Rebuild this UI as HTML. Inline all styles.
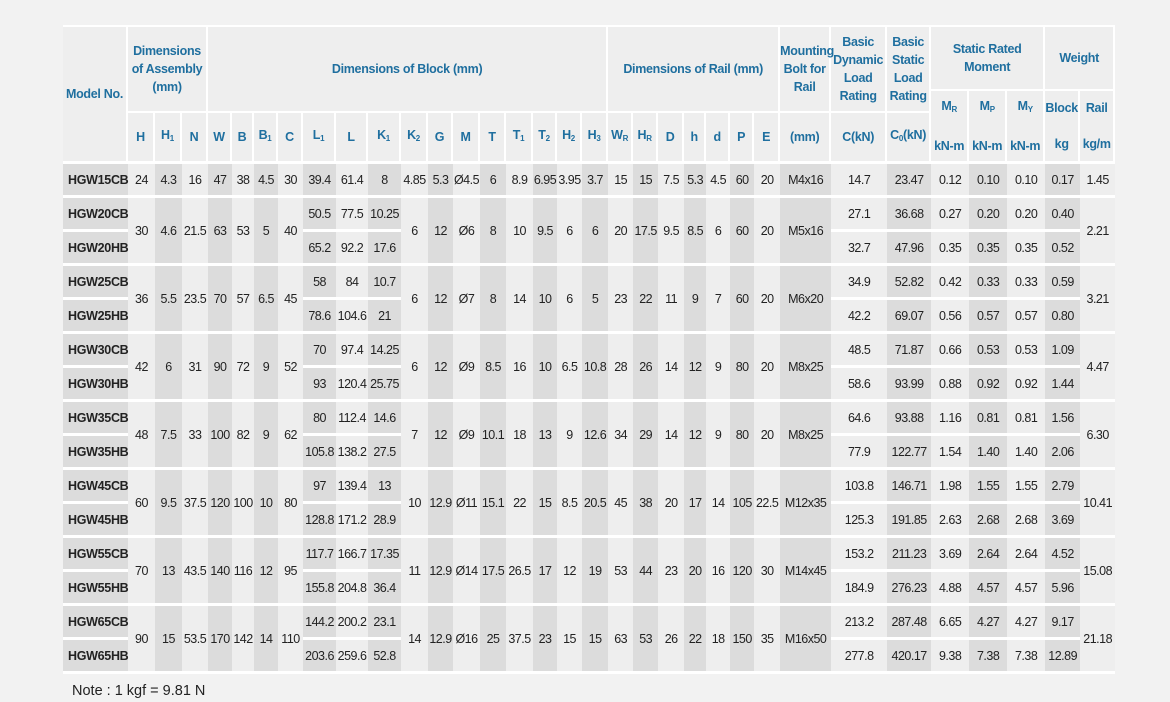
<!DOCTYPE html>
<html><head><meta charset="utf-8"><style>
body{margin:0;background:#f2f2f2;width:1170px;height:702px;overflow:hidden;font-family:"Liberation Sans",sans-serif;}
table{position:absolute;left:63px;top:25px;border-collapse:separate;border-spacing:0;table-layout:fixed;width:1052px;border-top:2px solid #fff;}
th{background:#eeeeee;color:#1f6f9f;font-weight:bold;font-size:12.5px;line-height:18px;border-right:2px solid #fff;border-bottom:2px solid #fff;padding:0;text-align:center;letter-spacing:-0.3px;white-space:nowrap;}
th.l{border-bottom:3px solid #fff}
td{border-bottom:3px solid #fff;padding:0;text-align:center;font-size:12.5px;color:#222;height:31px;white-space:nowrap;letter-spacing:-0.5px;}
td.m{font-weight:bold;font-size:12.5px;text-align:left;padding-left:5px;letter-spacing:-0.3px}
sub{font-size:8px;vertical-align:-2px}
.note{position:absolute;left:72px;top:683px;font-size:14.5px;color:#222}
</style></head><body>
<table>
<colgroup>
<col style="width:65px"><col style="width:27px"><col style="width:27px"><col style="width:26px"><col style="width:24px"><col style="width:22px"><col style="width:24px"><col style="width:25px"><col style="width:33px"><col style="width:32px"><col style="width:33px"><col style="width:27px"><col style="width:25px"><col style="width:27px"><col style="width:26px"><col style="width:27px"><col style="width:24px"><col style="width:25px"><col style="width:26px"><col style="width:25px"><col style="width:25px"><col style="width:26px"><col style="width:22px"><col style="width:24px"><col style="width:24px"><col style="width:26px"><col style="width:51px"><col style="width:56px"><col style="width:44px"><col style="width:38px"><col style="width:38px"><col style="width:38px"><col style="width:35px"><col style="width:35px">
</colgroup>
<tr style="height:64px">
<th rowspan="3" class="l">Model No.</th>
<th colspan="3" rowspan="2">Dimensions<br>of Assembly<br>(mm)</th>
<th colspan="15" rowspan="2">Dimensions of Block (mm)</th>
<th colspan="7" rowspan="2">Dimensions of Rail (mm)</th>
<th rowspan="2">Mounting<br>Bolt for<br>Rail</th>
<th rowspan="2">Basic<br>Dynamic<br>Load<br>Rating</th>
<th rowspan="2">Basic<br>Static<br>Load<br>Rating</th>
<th colspan="3">Static Rated<br>Moment</th>
<th colspan="2">Weight</th>
</tr>
<tr style="height:22px">
<th rowspan="2" class="l">M<sub>R</sub><br><br>kN-m</th>
<th rowspan="2" class="l">M<sub>P</sub><br><br>kN-m</th>
<th rowspan="2" class="l">M<sub>Y</sub><br><br>kN-m</th>
<th rowspan="2" class="l">Block<br><br>kg</th>
<th rowspan="2" class="l">Rail<br><br>kg/m</th>
</tr>
<tr style="height:51px">
<th class="l">H</th><th class="l">H<sub>1</sub></th><th class="l">N</th><th class="l">W</th><th class="l">B</th><th class="l">B<sub>1</sub></th><th class="l">C</th><th class="l">L<sub>1</sub></th><th class="l">L</th><th class="l">K<sub>1</sub></th><th class="l">K<sub>2</sub></th><th class="l">G</th><th class="l">M</th><th class="l">T</th><th class="l">T<sub>1</sub></th><th class="l">T<sub>2</sub></th><th class="l">H<sub>2</sub></th><th class="l">H<sub>3</sub></th><th class="l">W<sub>R</sub></th><th class="l">H<sub>R</sub></th><th class="l">D</th><th class="l">h</th><th class="l">d</th><th class="l">P</th><th class="l">E</th><th class="l">(mm)</th><th class="l">C(kN)</th><th class="l">C<sub>0</sub>(kN)</th>
</tr>
<tbody id="b"></tbody>
</table>
<div class="note">Note : 1 kgf = 9.81 N</div>
<script>
var D='#dcdcdc',L='#eeeeee';
function bg(i){return i%2==0?D:L}
var single=['HGW15CB','24','4.3','16','47','38','4.5','30','39.4','61.4','8','4.85','5.3','Ø4.5','6','8.9','6.95','3.95','3.7','15','15','7.5','5.3','4.5','60','20','M4x16','14.7','23.47','0.12','0.10','0.10','0.17','1.45'];
var groups=[
['20','30 4.6 21.5 63 53 5 40','50.5 77.5 10.25','65.2 92.2 17.6','6 12 Ø6 8 10 9.5 6 6 20 17.5 9.5 8.5 6 60 20 M5x16','27.1 36.68 0.27 0.20 0.20 0.40','32.7 47.96 0.35 0.35 0.35 0.52','2.21'],
['25','36 5.5 23.5 70 57 6.5 45','58 84 10.7','78.6 104.6 21','6 12 Ø7 8 14 10 6 5 23 22 11 9 7 60 20 M6x20','34.9 52.82 0.42 0.33 0.33 0.59','42.2 69.07 0.56 0.57 0.57 0.80','3.21'],
['30','42 6 31 90 72 9 52','70 97.4 14.25','93 120.4 25.75','6 12 Ø9 8.5 16 10 6.5 10.8 28 26 14 12 9 80 20 M8x25','48.5 71.87 0.66 0.53 0.53 1.09','58.6 93.99 0.88 0.92 0.92 1.44','4.47'],
['35','48 7.5 33 100 82 9 62','80 112.4 14.6','105.8 138.2 27.5','7 12 Ø9 10.1 18 13 9 12.6 34 29 14 12 9 80 20 M8x25','64.6 93.88 1.16 0.81 0.81 1.56','77.9 122.77 1.54 1.40 1.40 2.06','6.30'],
['45','60 9.5 37.5 120 100 10 80','97 139.4 13','128.8 171.2 28.9','10 12.9 Ø11 15.1 22 15 8.5 20.5 45 38 20 17 14 105 22.5 M12x35','103.8 146.71 1.98 1.55 1.55 2.79','125.3 191.85 2.63 2.68 2.68 3.69','10.41'],
['55','70 13 43.5 140 116 12 95','117.7 166.7 17.35','155.8 204.8 36.4','11 12.9 Ø14 17.5 26.5 17 12 19 53 44 23 20 16 120 30 M14x45','153.2 211.23 3.69 2.64 2.64 4.52','184.9 276.23 4.88 4.57 4.57 5.96','15.08'],
['65','90 15 53.5 170 142 14 110','144.2 200.2 23.1','203.6 259.6 52.8','14 12.9 Ø16 25 37.5 23 15 15 63 53 26 22 18 150 35 M16x50','213.2 287.48 6.65 4.27 4.27 9.17','277.8 420.17 9.38 7.38 7.38 12.89','21.18']];
var h='<tr>';
single.forEach(function(v,i){h+='<td'+(i==0?' class="m"':'')+' style="background:'+bg(i)+'">'+v+'</td>'});
h+='</tr>';
function c(v,i,rs){return '<td'+(i==0?' class="m"':'')+(rs?' rowspan="2"':'')+' style="background:'+bg(i)+'">'+v+'</td>'}
groups.forEach(function(g){
 var r1='<tr>'+c('HGW'+g[0]+'CB',0);
 g[1].split(' ').forEach(function(v,k){r1+=c(v,1+k,1)});
 g[2].split(' ').forEach(function(v,k){r1+=c(v,8+k)});
 g[4].split(' ').forEach(function(v,k){r1+=c(v,11+k,1)});
 g[5].split(' ').forEach(function(v,k){r1+=c(v,27+k)});
 r1+=c(g[7],33,1)+'</tr>';
 var r2='<tr>'+c('HGW'+g[0]+'HB',0);
 g[3].split(' ').forEach(function(v,k){r2+=c(v,8+k)});
 g[6].split(' ').forEach(function(v,k){r2+=c(v,27+k)});
 r2+='</tr>';
 h+=r1+r2;
});
document.getElementById('b').innerHTML=h;
</script>
</body></html>
